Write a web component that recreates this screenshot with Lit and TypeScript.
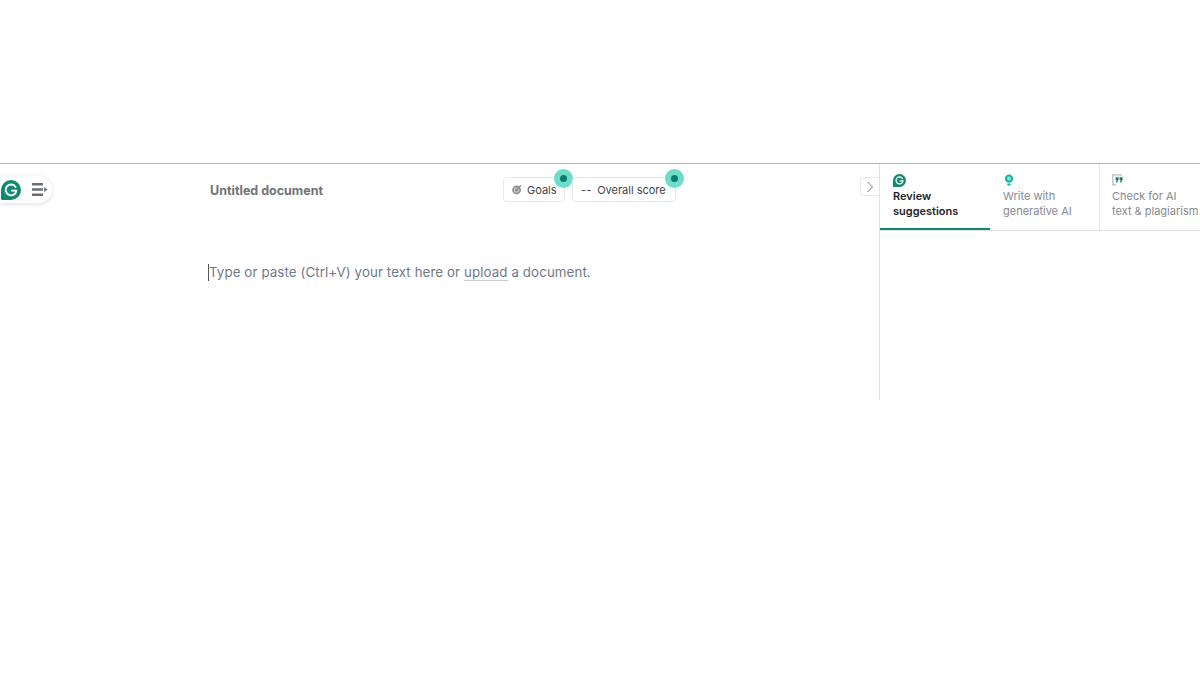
import { LitElement, html, css } from 'lit';
import { customElement } from 'lit/decorators.js';

const gLogo = (size: number) => html`
  <svg width=${size} height=${size} viewBox="0 0 20 20">
    <path d="M10 0a10 10 0 1 1 0 20H1.2C.5 20 0 19.5 0 18.8V10A10 10 0 0 1 10 0z" fill="#0f8a70"></path>
    <path d="M14.6 7a5.4 5.4 0 1 0 .8 3.6h-4.6" fill="none" stroke="#fff" stroke-width="1.9" stroke-linecap="round" stroke-linejoin="round"></path>
  </svg>
`;

const tabs = [
  { lines: ['Review', 'suggestions'], icon: 'g', active: true },
  { lines: ['Write with', 'generative AI'], icon: 'bulb', active: false },
  { lines: ['Check for AI', 'text & plagiarism'], icon: 'quote', active: false },
];

@customElement('app-root')
export class AppRoot extends LitElement {
  private _tabIcon(name: string) {
    if (name === 'g') return gLogo(13);
    if (name === 'bulb') {
      return html`
        <svg width="12" height="12" viewBox="0 0 12 12">
          <circle cx="6" cy="4.6" r="3.1" fill="#8fe3d6" stroke="#17b7a0" stroke-width="2.2"></circle>
          <rect x="4.2" y="9.6" width="3.6" height="2" rx="1" fill="#17b7a0"></rect>
        </svg>
      `;
    }
    return html`
      <svg width="12" height="12" viewBox="0 0 12 12">
        <path d="M10 .8H.8v10H4" fill="none" stroke="#b4bcc2" stroke-width="1.2"></path>
        <path d="M3.6 3.2h3v2.6L5 8.4H3.8l.9-2.4H3.6zM7.6 3.2h3v2.6L9 8.4H7.8l.9-2.4H7.6z" fill="#0f7f6b"></path>
      </svg>
    `;
  }

  render() {
    return html`
      <div class="app">
        <div class="editor">
          <div class="toolbar">
            <div class="slot-pill">
              <div class="pill">
                ${gLogo(20)}
                <svg width="16" height="13" viewBox="0 0 16 13">
                  <path d="M0 1.2h11M0 6.5h11M0 11.8h11" stroke="#6b6f73" stroke-width="2.4"></path>
                  <path d="M12.2 4 15.6 6.5l-3.4 2.5z" fill="#6b6f73"></path>
                </svg>
              </div>
            </div>
            <div class="title">Untitled document</div>
            <div class="actions">
              <div class="btn goals">
                <svg width="10" height="11" viewBox="0 0 10 11">
                  <circle cx="4.6" cy="6" r="3.6" fill="#c3c7ca" stroke="#8a8f92" stroke-width="1.6"></circle>
                  <circle cx="4.6" cy="6" r="1.2" fill="#777c80"></circle>
                  <path d="M4.6 6 9 1.2" stroke="#8a8f92" stroke-width="1.3"></path>
                </svg>
                Goals
                <span class="pulse"><i></i></span>
              </div>
              <div class="btn score">
                <span>--</span> Overall score
                <span class="pulse"><i></i></span>
              </div>
            </div>
            <div class="collapse">
              <svg width="8" height="12" viewBox="0 0 8 12">
                <path d="M1.5 1 6.5 6l-5 5" fill="none" stroke="#6f7478" stroke-width="1"></path>
              </svg>
            </div>
          </div>
          <div class="body">
            <span class="caret"></span>Type or paste (Ctrl+V) your text here or <span class="upload">upload</span> a document.
          </div>
        </div>
        <div class="sidebar">
          <div class="tabs">
            ${tabs.map(t => html`
              <div class="tab ${t.active ? 'active' : ''}">
                <div class="tab-icon">${this._tabIcon(t.icon)}</div>
                <div class="tab-label">${t.lines[0]}<br />${t.lines[1]}</div>
              </div>
            `)}
          </div>
        </div>
      </div>
    `;
  }

  static styles = css`
    :host {
      display: block;
      height: 675px;
      background: #fff;
      padding-top: 163px;
      box-sizing: border-box;
      font-family: Inter, "Liberation Sans", sans-serif;
      overflow: hidden;
    }

    .app {
      display: flex;
      height: 237px;
      box-sizing: border-box;
      border-top: 1px solid #9dbcc2;
    }

    .editor {
      width: 879px;
      flex: none;
    }

    .toolbar {
      display: grid;
      grid-template-columns: 210px 293px auto 1fr auto;
      align-items: start;
      padding-top: 12px;
    }

    .pill {
      display: flex;
      align-items: center;
      gap: 11px;
      width: 52px;
      height: 27px;
      box-sizing: border-box;
      padding-left: 1px;
      background: #fff;
      border-radius: 0 14px 14px 0;
      box-shadow: 0 1px 4px rgba(40, 50, 60, 0.16);
    }

    .title {
      font-size: 12.5px;
      font-weight: 700;
      line-height: 29px;
      color: #707477;
    }

    .actions {
      display: flex;
      gap: 7px;
      grid-column: 3;
      padding-top: 1px;
    }

    .btn {
      position: relative;
      display: flex;
      align-items: center;
      height: 25px;
      box-sizing: border-box;
      border: 1px solid #e6e8ea;
      border-radius: 4px;
      font-size: 11px;
      color: #3f4448;
      background: #fff;
    }

    .goals {
      width: 62px;
      padding-left: 8px;
      gap: 5px;
    }

    .score {
      width: 104px;
      padding-left: 8px;
    }

    .score span:first-child {
      margin-right: 5px;
      letter-spacing: 0.5px;
    }

    .pulse {
      position: absolute;
      top: -9px;
      right: -9px;
      width: 19px;
      height: 19px;
      border-radius: 50%;
      background: #6edccb;
      display: flex;
      align-items: center;
      justify-content: center;
    }

    .pulse i {
      width: 7px;
      height: 7px;
      border-radius: 50%;
      background: #0b7d6c;
    }

    .collapse {
      grid-column: 5;
      display: flex;
      align-items: center;
      justify-content: center;
      width: 19px;
      height: 19px;
      margin-top: 1px;
      box-sizing: border-box;
      border: 1px solid #e6e8ea;
      border-right: none;
      border-radius: 4px 0 0 4px;
      background: #fff;
    }

    .body {
      margin: 57px 0 0 208px;
      font-size: 13.3px;
      line-height: 20px;
      letter-spacing: 0.1px;
      color: #6f7a8a;
    }

    .caret {
      display: inline-block;
      width: 1px;
      height: 17px;
      background: #555;
      vertical-align: -4px;
    }

    .upload {
      border-bottom: 1px solid #c5cad0;
    }

    .sidebar {
      flex: 1;
      border-left: 1px solid #dfe2e4;
      overflow: hidden;
    }

    .tabs {
      display: flex;
      height: 67px;
      box-sizing: border-box;
      border-bottom: 1px solid #dfe2e4;
    }

    .tab {
      flex: none;
      width: 110px;
      height: 66px;
      box-sizing: border-box;
      padding: 10px 0 0 13px;
      border-right: 1px solid #e6e8ea;
      color: #85898e;
      font-size: 11px;
      line-height: 15px;
      white-space: nowrap;
    }

    .tab:last-child {
      border-right: none;
      padding-left: 12px;
    }

    .tab.active {
      color: #1f2328;
      font-weight: 600;
      border-right: none;
      border-bottom: 2px solid #0f8a70;
    }

    .tab-icon {
      height: 13px;
      margin-bottom: 2px;
    }

    .tab-icon svg {
      display: block;
    }
  `;
}
